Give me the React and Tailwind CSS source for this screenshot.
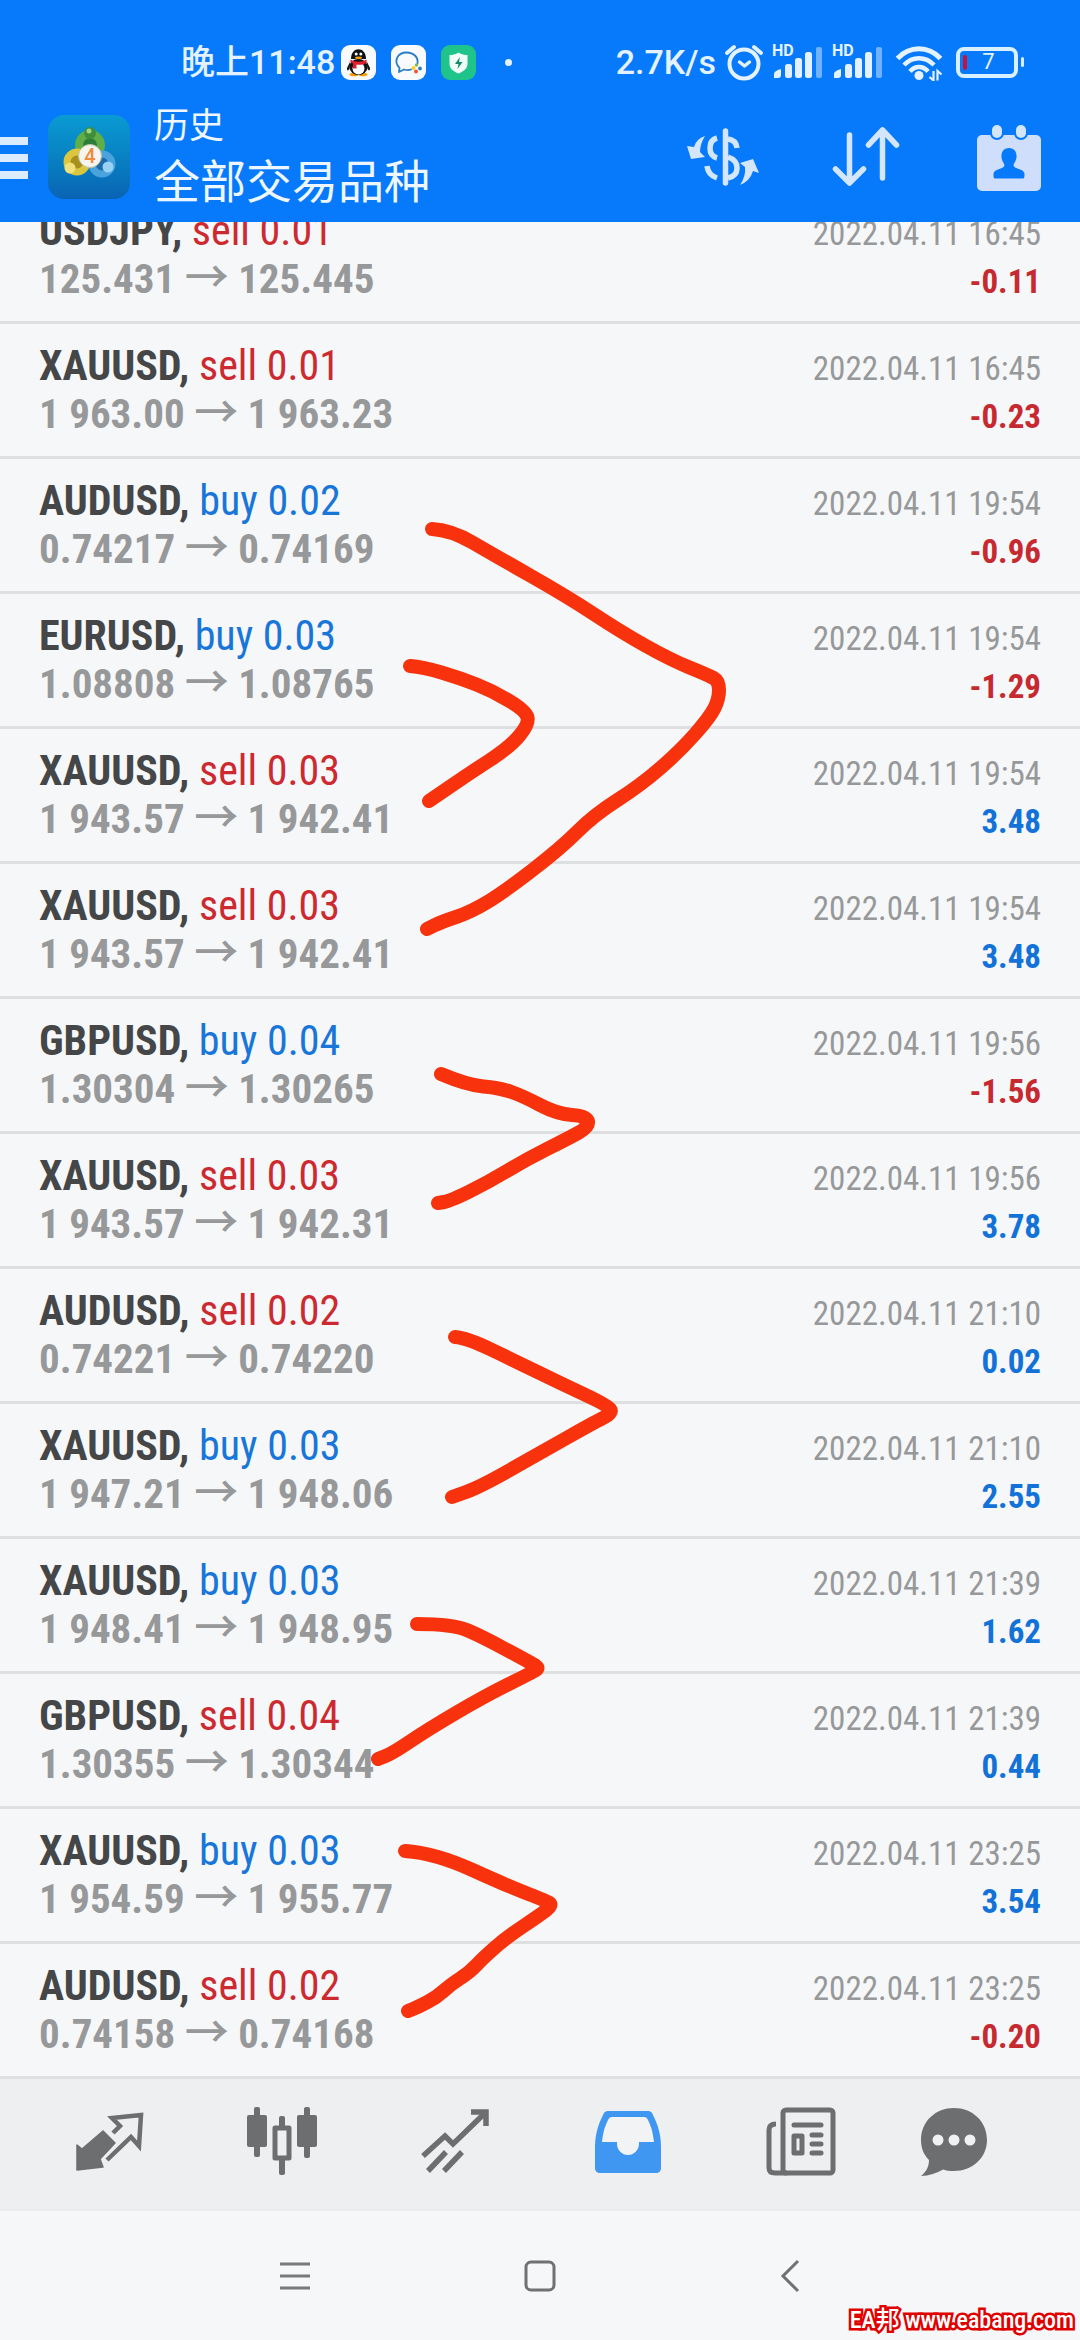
import React from 'react';

// -------------------------------------------------------------
// DATA
// -------------------------------------------------------------
const DEALS = [
  { symbol: 'USDJPY', side: 'sell', volume: '0.01', open: '125.431', close: '125.445', time: '2022.04.11 16:45', profit: '-0.11' },
  { symbol: 'XAUUSD', side: 'sell', volume: '0.01', open: '1 963.00', close: '1 963.23', time: '2022.04.11 16:45', profit: '-0.23' },
  { symbol: 'AUDUSD', side: 'buy', volume: '0.02', open: '0.74217', close: '0.74169', time: '2022.04.11 19:54', profit: '-0.96' },
  { symbol: 'EURUSD', side: 'buy', volume: '0.03', open: '1.08808', close: '1.08765', time: '2022.04.11 19:54', profit: '-1.29' },
  { symbol: 'XAUUSD', side: 'sell', volume: '0.03', open: '1 943.57', close: '1 942.41', time: '2022.04.11 19:54', profit: '3.48' },
  { symbol: 'XAUUSD', side: 'sell', volume: '0.03', open: '1 943.57', close: '1 942.41', time: '2022.04.11 19:54', profit: '3.48' },
  { symbol: 'GBPUSD', side: 'buy', volume: '0.04', open: '1.30304', close: '1.30265', time: '2022.04.11 19:56', profit: '-1.56' },
  { symbol: 'XAUUSD', side: 'sell', volume: '0.03', open: '1 943.57', close: '1 942.31', time: '2022.04.11 19:56', profit: '3.78' },
  { symbol: 'AUDUSD', side: 'sell', volume: '0.02', open: '0.74221', close: '0.74220', time: '2022.04.11 21:10', profit: '0.02' },
  { symbol: 'XAUUSD', side: 'buy', volume: '0.03', open: '1 947.21', close: '1 948.06', time: '2022.04.11 21:10', profit: '2.55' },
  { symbol: 'XAUUSD', side: 'buy', volume: '0.03', open: '1 948.41', close: '1 948.95', time: '2022.04.11 21:39', profit: '1.62' },
  { symbol: 'GBPUSD', side: 'sell', volume: '0.04', open: '1.30355', close: '1.30344', time: '2022.04.11 21:39', profit: '0.44' },
  { symbol: 'XAUUSD', side: 'buy', volume: '0.03', open: '1 954.59', close: '1 955.77', time: '2022.04.11 23:25', profit: '3.54' },
  { symbol: 'AUDUSD', side: 'sell', volume: '0.02', open: '0.74158', close: '0.74168', time: '2022.04.11 23:25', profit: '-0.20' },
];

// Pen strokes that pair up the deals
const STROKES = [
  [[432, 529], [451, 530], [494, 555], [568, 597], [621, 632], [671, 660], [708, 675], [719, 681], [719, 699], [710, 717], [681, 750], [641, 785], [594, 815], [561, 848], [504, 892], [471, 912], [441, 922], [427, 929]],
  [[410, 666], [423, 667], [460, 678], [493, 691], [526, 711], [529, 724], [510, 747], [470, 773], [429, 801]],
  [[441, 1074], [467, 1085], [500, 1088], [523, 1096], [557, 1114], [587, 1116], [589, 1127], [567, 1139], [527, 1159], [487, 1183], [450, 1201], [438, 1203]],
  [[455, 1337], [467, 1338], [513, 1360], [560, 1383], [607, 1405], [613, 1413], [593, 1423], [540, 1453], [480, 1487], [452, 1497]],
  [[417, 1624], [453, 1624], [483, 1637], [533, 1664], [539, 1668], [533, 1672], [483, 1697], [427, 1730], [393, 1753], [378, 1759]],
  [[405, 1851], [435, 1853], [510, 1887], [547, 1901], [552, 1905], [543, 1913], [507, 1937], [483, 1958], [470, 1972], [450, 1985], [437, 1997], [418, 2007], [408, 2011]],
];

const smooth = (pts) => {
  let d = `M${pts[0][0]} ${pts[0][1]}`;
  for (let i = 1; i < pts.length - 1; i++) {
    const [x, y] = pts[i];
    const [nx, ny] = pts[i + 1];
    d += ` Q${x} ${y} ${(x + nx) / 2} ${(y + ny) / 2}`;
  }
  const [lx, ly] = pts[pts.length - 1];
  return `${d} L${lx} ${ly}`;
};

// -------------------------------------------------------------
// STATUS BAR
// -------------------------------------------------------------
const QQIcon = () => (
  <svg className="w-[35px] h-[35px]" viewBox="0 0 35 35">
    <rect width="35" height="35" rx="9" fill="#f8fafc" />
    <ellipse cx="13" cy="29.500" rx="4.500" ry="1.800" fill="#f59e0b" />
    <ellipse cx="22" cy="29.500" rx="4.500" ry="1.800" fill="#f59e0b" />
    <path d="M9.500 16 6 23c0 3 1 3 2.500 1ZM25.500 16l3.500 7c0 3-1 3-2.500 1Z" fill="#111" />
    <ellipse cx="17.500" cy="22" rx="9" ry="8" fill="#111" />
    <ellipse cx="17.500" cy="23.500" rx="6" ry="6" fill="#fff" />
    <path d="M10 14C10 1 25 1 25 14Z" fill="#111" />
    <path d="M9.500 14.500c5 3 11 3 16 0v3.500c-4 2-7 2-10 1.500v4h-3.500v-5l-2.500-1.500Z" fill="#e11d2e" />
    <circle cx="15.200" cy="9" r="1.500" fill="#fff" />
    <circle cx="19.800" cy="9" r="1.500" fill="#fff" />
    <ellipse cx="17.500" cy="12.800" rx="3.500" ry="1.200" fill="#f59e0b" />
  </svg>
);

const WorkChatIcon = () => (
  <svg className="w-[35px] h-[35px]" viewBox="0 0 35 35">
    <rect width="35" height="35" rx="9" fill="#f8fafc" />
    <path d="M20 24.500c-2 .8-4 .8-7 0L8 27l.5-4.200C2 16 6.500 7.500 15.500 7.500c7.500 0 12 5 11 11" fill="none" stroke="#2b7cc4" strokeWidth="1.800" strokeLinecap="round" strokeLinejoin="round" />
    <circle cx="25.500" cy="20" r="1.700" fill="#7bbf4a" />
    <circle cx="22.500" cy="23" r="1.900" fill="#facc15" />
    <circle cx="29" cy="23.500" r="1.900" fill="#2b7cc4" />
    <circle cx="25" cy="26.500" r="1.900" fill="#f0532d" />
  </svg>
);

const GuardIcon = () => (
  <svg className="w-[35px] h-[35px]" viewBox="0 0 35 35">
    <rect width="35" height="35" rx="9" fill="#1fc48a" />
    <path d="M17.500 7.500c3 2 6 2.500 9 2.500v9c0 4.500-4 7.500-9 9.500-5-2-9-5-9-9.500v-9c3 0 6-.5 9-2.500Z" fill="#f0fdf9" />
    <path d="m19 12-5 7h3.500l-1 5 5-7H18Z" fill="#128a68" />
  </svg>
);

const AlarmIcon = () => (
  <svg className="w-10 h-[38px]" viewBox="0 0 40 38" fill="none" stroke="#e4f1ff" strokeLinecap="round">
    <circle cx="20" cy="21" r="14.500" strokeWidth="4" />
    <path d="M3 10 10 4M37 10 30 4" strokeWidth="4" />
    <path d="m15.500 19 5 4 5-4" strokeWidth="3.500" strokeLinejoin="round" />
  </svg>
);

const Signal = () => (
  <div className="relative w-[52px] h-[38px]">
    <span className="absolute left-0 top-0 text-[16px] leading-[16px] font-bold">HD</span>
    <svg className="w-[52px] h-[38px]" viewBox="0 0 52 38" fill="#e4f1ff">
      <path d="M2 35v-4q0-3 7-5v6q0 3-3 3Z" />
      <rect x="13" y="21" width="7" height="14" rx="2.500" />
      <rect x="23" y="15" width="7" height="20" rx="2.500" />
      <rect x="33" y="9" width="7" height="26" rx="2.500" />
      <rect x="44" y="4" width="6" height="31" rx="2" fill="#6fb2ff" />
    </svg>
  </div>
);

const WifiIcon = () => (
  <svg className="w-[48px] h-[38px]" viewBox="0 0 48 38" fill="none" stroke="#e4f1ff" strokeLinecap="butt">
    <path d="M2.500 15.500c12-13 31-13 43 0" strokeWidth="5" />
    <path d="M9 22c8.500-9 21.500-9 30 0" strokeWidth="4.500" />
    <path d="M15 28.500c5-6 13-6 18 0" strokeWidth="4.500" />
    <circle cx="24" cy="32.500" r="4.500" fill="#e4f1ff" stroke="none" />
    <path d="M38.500 28v9.500l-4-3.500M42.500 37.500V28l4 3.500" strokeWidth="2.200" />
  </svg>
);

const Battery = () => (
  <div className="flex items-center gap-[3px]">
    <div className="w-[62px] h-[31px] rounded-[8px] border-[4px] border-[#d8f0ff] flex items-center">
      <span className="ml-[3px] w-1 h-[15px] rounded-sm bg-[#c4123a]"></span>
      <span className="grow pr-1 text-center text-[22px] leading-[22px]">7</span>
    </div>
    <span className="w-[3px] h-[10px] rounded-sm bg-[#d8f0ff]"></span>
  </div>
);

const StatusBar = () => (
  <div className="flex items-center h-[62px] mt-[31px] pl-[181px] pr-[56px] text-[34px] leading-[40px] text-[#e4f1ff]">
    <span className="font-medium">晚上11:48</span>
    <div className="flex items-center gap-[15px] ml-[6px]">
      <QQIcon />
      <WorkChatIcon />
      <GuardIcon />
    </div>
    <span className="ml-[29px] w-[7px] h-[7px] rounded-full bg-[#e4f1ff]"></span>
    <div className="ml-auto flex items-center">
      <span className="font-medium">2.7K/s</span>
      <div className="flex items-center gap-2 ml-[8px]">
        <AlarmIcon />
        <Signal />
        <Signal />
      </div>
      <div className="flex items-center gap-[13px] ml-[11px]">
        <WifiIcon />
        <Battery />
      </div>
    </div>
  </div>
);

// -------------------------------------------------------------
// TITLE BAR
// -------------------------------------------------------------
const AppLogo = () => (
  <svg className="w-[82px] h-[84px]" viewBox="0 0 82 84">
    <defs>
      <linearGradient id="logoBg" x1="0" y1="0" x2="0" y2="1">
        <stop offset="0" stopColor="#0a9bd2" />
        <stop offset="0.6" stopColor="#087cc0" />
        <stop offset="1" stopColor="#0a63b4" />
      </linearGradient>
    </defs>
    <rect width="82" height="84" rx="16" fill="url(#logoBg)" />
    <circle cx="42" cy="30" r="11" fill="#2f7d3a" stroke="#5fae48" strokeWidth="8" />
    <circle cx="29" cy="47" r="10" fill="#a98f1c" stroke="#dcc63e" strokeWidth="7" />
    <circle cx="54" cy="49" r="10" fill="#1c6cab" stroke="#4ba3de" strokeWidth="7" />
    <circle cx="42" cy="18" r="6" fill="#3f8f3a" />
    <circle cx="41" cy="16" r="2.500" fill="#9ed486" />
    <circle cx="22" cy="53" r="5.500" fill="#efe07a" />
    <circle cx="60" cy="52" r="5.500" fill="#9ad2f4" />
    <circle cx="42" cy="41" r="11.500" fill="#f7f4ef" stroke="#b9c4a0" strokeWidth="1" />
    <text x="42" y="48" textAnchor="middle" fontSize="20" fontWeight="500" fill="#f08a3c">4</text>
  </svg>
);

const CurrencyIcon = () => (
  <svg className="w-[74px] h-[60px]" viewBox="0 0 74 60" fill="none" stroke="#d3e6fc">
    <path d="M39.500 4v52" strokeWidth="5.500" strokeLinecap="round" />
    <path d="M42 12q8 1 9 9" strokeWidth="5.500" />
    <path d="M31 11q-7 2-7 10 0 8 7 10" strokeWidth="5.500" />
    <path d="M42 30q9 3 9 11 0 8-9 10" strokeWidth="5.500" />
    <path d="M21 39q1 9 10 12" strokeWidth="5.500" />
    <path d="M19 9q-9 3-11 11l-7-1 4 13 14-2-5-5q0-8 5-16Z" fill="#d3e6fc" stroke="none" />
    <path d="M54 58q10-4 13-14l6 2-6-14-13 4 5 4q1 9-5 18Z" fill="#d3e6fc" stroke="none" />
  </svg>
);

const SortIcon = () => (
  <svg className="w-[68px] h-[60px]" viewBox="0 0 68 60" fill="none" stroke="#d3e6fc" strokeWidth="5.500" strokeLinecap="round" strokeLinejoin="round">
    <path d="M17.500 9v47M3.500 43l14 14 14-14" />
    <path d="M50.500 52V4M36.500 19l14-15 14 15" />
  </svg>
);

const CalendarIcon = () => (
  <svg className="w-[64px] h-[68px]" viewBox="0 0 64 68">
    <rect x="0" y="11" width="64" height="56" rx="5" fill="#cfdffb" />
    <rect x="13" y="-2" width="14" height="18" rx="7" fill="#067afb" />
    <rect x="37" y="-2" width="14" height="18" rx="7" fill="#067afb" />
    <rect x="15" y="1" width="10" height="13" rx="5" fill="#d3e6fc" />
    <rect x="39" y="1" width="10" height="13" rx="5" fill="#d3e6fc" />
    <path d="M32 24c6 0 8 5 7.500 9.500-.5 4-2.500 5-3 8 1 4 11 3 11 8.500 0 2.500 0 4.500-1.500 4.500H18c-1.500 0-1.500-2-1.500-4.500 0-5.500 10-4.500 11-8.500-.5-3-2.500-4-3-8C24 29 26 24 32 24Z" fill="#067afb" />
  </svg>
);

const TitleBar = () => (
  <div className="flex items-start h-[129px]">
    <button aria-label="menu" className="mt-[44px] w-[28px] flex flex-col gap-[9px]">
      <span className="w-full h-2 bg-[#dcecff]"></span>
      <span className="w-full h-2 bg-[#dcecff]"></span>
      <span className="w-full h-2 bg-[#dcecff]"></span>
    </button>
    <div className="mt-[22px] ml-[20px]">
      <AppLogo />
    </div>
    <div className="mt-[9px] ml-[24px] text-[#eef6ff]">
      <p className="text-[35px] leading-[50px]">历史</p>
      <h1 className="text-[46px] leading-[60px] font-normal">全部交易品种</h1>
    </div>
    <div className="ml-auto mt-[31px] pr-[39px] flex items-start">
      <button aria-label="currency" className="mt-[3px]"><CurrencyIcon /></button>
      <button aria-label="sort" className="mt-[2px] ml-[72px]"><SortIcon /></button>
      <button aria-label="period" className="ml-[77px]"><CalendarIcon /></button>
    </div>
  </div>
);

// -------------------------------------------------------------
// DEAL LIST
// -------------------------------------------------------------
const DealRow = ({ deal }) => {
  const sideColor = deal.side === 'buy' ? 'text-[#1976d9]' : 'text-[#cc2a30]';
  const profitColor = deal.profit.startsWith('-') ? 'text-[#c62a30]' : 'text-[#1272d8]';

  return (
    <li className="h-[135px] pt-[18px] px-[39px] border-b-[3px] border-[#dddfe0]">
      <div className="flex items-baseline justify-between h-12 leading-[48px]">
        <span className="text-[42px]">
          <b className="font-bold text-[#444648]">{deal.symbol},</b>{' '}
          <span className={sideColor}>{deal.side} {deal.volume}</span>
        </span>
        <time className="text-[33px] text-[#96989a]">{deal.time}</time>
      </div>
      <div className="flex items-baseline justify-between h-12 leading-[48px] font-bold">
        <span className="text-[41px] text-[#96989a]">
          {deal.open} <span className="text-[44px] leading-none font-medium">→</span> {deal.close}
        </span>
        <span className={`text-[33px] ${profitColor}`}>{deal.profit}</span>
      </div>
    </li>
  );
};

// -------------------------------------------------------------
// BOTTOM TABS
// -------------------------------------------------------------
const QuotesIcon = () => (
  <svg className="w-[70px] h-[70px]" viewBox="0 0 70 70">
    <path d="M29 24 41 36 26 52l3 8-26 3V38l5 4Z" fill="#6c6e70" stroke="#6c6e70" strokeWidth="1.500" strokeLinejoin="round" />
    <path d="M39 26l7-7-8-8 29-3-2 31-8-9-24 23" fill="none" stroke="#6c6e70" strokeWidth="4.500" strokeLinejoin="miter" />
  </svg>
);

const CandlesIcon = () => (
  <svg className="w-[70px] h-[70px]" viewBox="0 0 70 70" fill="#6c6e70">
    <rect x="7" y="0" width="6" height="50" rx="2" />
    <rect x="0" y="8" width="20" height="32" rx="2" />
    <rect x="57" y="0" width="6" height="51" rx="2" />
    <rect x="50" y="8" width="20" height="32" rx="2" />
    <rect x="32" y="9" width="6" height="59" rx="2" />
    <rect x="28" y="21" width="14" height="30" fill="#eeeff1" stroke="#6c6e70" strokeWidth="5" strokeLinejoin="round" />
  </svg>
);

const TrendIcon = () => (
  <svg className="w-[70px] h-[70px]" viewBox="0 0 70 70" fill="none" stroke="#6c6e70" strokeWidth="5.500">
    <path d="M3 49 25 29l8 8L64 7" />
    <path d="M51 5h15v14" />
    <path d="M8 64 26 45M24 64 42 45" />
  </svg>
);

const InboxIcon = () => (
  <svg className="w-[68px] h-[66px]" viewBox="0 0 68 66">
    <path d="M14 2h40c3 0 4 2 5 4 5 10 8 20 8 32v21c0 3-2 5-5 5H6c-3 0-5-2-5-5V38C1 26 4 16 9 6c1-2 2-4 5-4Z" fill="#3f97f2" />
    <path d="M18 8h32c2 0 3 1 4 3 4 8 5 14 6 22H45v2c0 6-5 11-11 11s-11-5-11-11v-2H8c1-8 2-14 6-22 1-2 2-3 4-3Z" fill="#f2f3f5" />
  </svg>
);

const NewsIcon = () => (
  <svg className="w-[70px] h-[70px]" viewBox="0 0 70 70" fill="none" stroke="#6c6e70" strokeWidth="5">
    <rect x="17" y="3" width="50" height="63" rx="3" />
    <path d="M10 17q-7 0-7 6v38q0 5 6 5h12" />
    <path d="M28 18h27" strokeWidth="5" strokeLinecap="round" />
    <rect x="28" y="29" width="8" height="17" strokeLinejoin="round" />
    <path d="M46 28h9M46 37h9M46 46h9" strokeLinecap="round" />
  </svg>
);

const ChatIcon = () => (
  <svg className="w-[68px] h-[70px]" viewBox="0 0 68 70">
    <path d="M34 1C52 1 67 14 67 33c0 18-15 31-33 31-4 0-8-.5-11-1.500C17 66 9 69 1 69c5-4 8-9 8-16C3 47 1 40 1 33 1 14 16 1 34 1Z" fill="#6c6e70" />
    <circle cx="18" cy="33" r="5.500" fill="#f0f1f3" />
    <circle cx="34" cy="33" r="5.500" fill="#f0f1f3" />
    <circle cx="50" cy="33" r="5.500" fill="#f0f1f3" />
  </svg>
);

const TABS = [
  { name: 'quotes', Icon: QuotesIcon },
  { name: 'charts', Icon: CandlesIcon },
  { name: 'trade', Icon: TrendIcon },
  { name: 'history', Icon: InboxIcon },
  { name: 'news', Icon: NewsIcon },
  { name: 'messages', Icon: ChatIcon },
];

const TabBar = () => (
  <nav className="grid grid-cols-[repeat(5,173fr)_134fr] h-[132px] pl-[22px] pr-[59px] pb-[5px] bg-[#eeeff1] border-b-2 border-[#ebecee]">
    {TABS.map(({ name, Icon }) => (
      <button key={name} aria-label={name} className="flex items-center justify-center">
        <Icon />
      </button>
    ))}
  </nav>
);

const SystemNav = () => (
  <div className="flex items-center justify-between h-[129px] px-[25%]">
    <button aria-label="recents" className="w-10 flex justify-end">
      <svg className="w-[30px] h-[32px]" viewBox="0 0 30 32" stroke="#77797b" strokeWidth="3">
        <path d="M0 4h30M0 16h30M0 28h30" />
      </svg>
    </button>
    <button aria-label="home" className="w-10 flex justify-center">
      <svg className="w-[32px] h-[32px]" viewBox="0 0 32 32" fill="none" stroke="#6f7173" strokeWidth="3">
        <rect x="2" y="2" width="28" height="28" rx="5" />
      </svg>
    </button>
    <button aria-label="back" className="w-10 flex justify-center">
      <svg className="w-[20px] h-[34px]" viewBox="0 0 20 34" fill="none" stroke="#6f7173" strokeWidth="3">
        <path d="M18 2 3 17l15 15" />
      </svg>
    </button>
  </div>
);

const App = () => (
  <div className="relative w-full overflow-hidden bg-[#f6f7f8] font-['Roboto','Noto_Sans_CJK_SC',sans-serif]">
    <header className="bg-[#067afb] flow-root">
      <StatusBar />
      <TitleBar />
    </header>

    <main className="relative overflow-hidden font-['Roboto_Condensed','Roboto','Noto_Sans_CJK_SC',sans-serif]">
      {/* scrolled list, the first deal is partly under the header */}
      <ul className="-mt-[33px]">
        {DEALS.map((deal, i) => (
          <DealRow key={i} deal={deal} />
        ))}
      </ul>
      <svg
        className="absolute inset-0 w-full h-full pointer-events-none"
        viewBox="0 222 1080 1857"
        fill="none"
        stroke="#f7320c"
        strokeWidth="14"
        strokeLinecap="round"
        strokeLinejoin="round"
      >
        {STROKES.map((pts, i) => (
          <path key={i} d={smooth(pts)} />
        ))}
      </svg>
    </main>

    <TabBar />
    <SystemNav />

    <a
      href="#eabang"
      className="absolute right-[6px] bottom-[4px] text-[24px] leading-[32px] font-medium text-white font-['Roboto_Condensed','Noto_Sans_CJK_SC',sans-serif] [-webkit-text-stroke:5px_#e00000] [paint-order:stroke_fill]"
    >
      EA邦 www.eabang.com
    </a>
  </div>
);

export default App;
